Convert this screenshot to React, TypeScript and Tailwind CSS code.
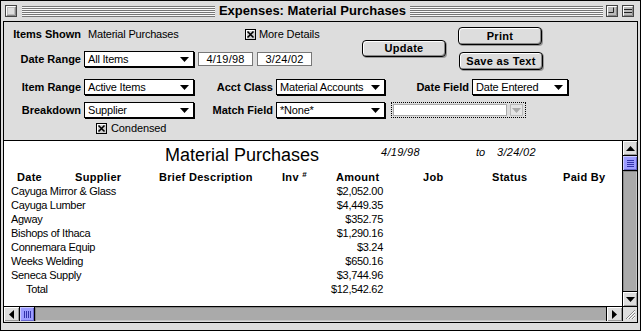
import React from "react"

const rows = [
  { supplier: "Cayuga Mirror & Glass", amount: "$2,052.00" },
  { supplier: "Cayuga Lumber", amount: "$4,449.35" },
  { supplier: "Agway", amount: "$352.75" },
  { supplier: "Bishops of Ithaca", amount: "$1,290.16" },
  { supplier: "Connemara Equip", amount: "$3.24" },
  { supplier: "Weeks Welding", amount: "$650.16" },
  { supplier: "Seneca Supply", amount: "$3,744.96" },
]

function DownArrow({ color = "#000" }: { color?: string }) {
  return (
    <svg width="9" height="5" viewBox="0 0 9 5">
      <polygon points="0,0 9,0 4.5,5" fill={color} />
    </svg>
  )
}

function Popup({ text, className }: { text: string; className: string }) {
  return (
    <div
      className={`h-[16px] border border-black bg-white shadow-[1px_1px_0_#000] flex items-center justify-between pl-[3px] pr-[4px] text-[11px] tracking-[-0.2px] ${className}`}
    >
      <span>{text}</span>
      <DownArrow />
    </div>
  )
}

function Check() {
  return (
    <svg width="11" height="11" viewBox="0 0 11 11">
      <rect x="0.5" y="0.5" width="10" height="10" fill="#cfcfcf" stroke="#000" />
      <path d="M1.5 9.5V1.5H9.5" stroke="#fff" fill="none" />
      <path d="M2.5 2.5L8.5 8.5M8.5 2.5L2.5 8.5" stroke="#000" strokeWidth="1.6" />
    </svg>
  )
}

function Label({ text, className }: { text: string; className: string }) {
  return <div className={`text-right font-bold text-[11px] ${className}`}>{text}</div>
}

function Btn({ text, className }: { text: string; className: string }) {
  return (
    <div
      className={`rounded-[4px] border border-black bg-[#dddddd] shadow-[inset_1px_1px_0_#fff,inset_-1px_-1px_0_#888,1px_1px_0_#999] flex items-center justify-center font-bold text-[11px] tracking-[0.3px] ${className}`}
    >
      {text}
    </div>
  )
}

function DateBox({ text }: { text: string }) {
  return (
    <div className="w-[55px] h-[14px] mt-[1px] border border-[#777] bg-white flex items-center justify-center text-[11px] tracking-[0.2px]">
      {text}
    </div>
  )
}

function TitleBox({ kind }: { kind: "close" | "zoom" | "shade" }) {
  return (
    <svg width="12" height="12" viewBox="0 0 12 12">
      <rect x="0.5" y="0.5" width="11" height="11" fill="#bbb" stroke="#444" />
      <path d="M1.5 10.5V1.5H10.5" stroke="#fff" fill="none" />
      <path d="M2 10.5H10.5V2" stroke="#888" fill="none" />
      {kind === "close" && <rect x="3" y="3" width="6" height="6" fill="#ddd" />}
      {kind === "zoom" && <path d="M2.5 7.5H7.5V2.5" stroke="#222" fill="none" />}
      {kind === "shade" && <path d="M2 4.5H10M2 7.5H10" stroke="#222" />}
    </svg>
  )
}

const stripes =
  "h-[11px] bg-[repeating-linear-gradient(to_bottom,#777_0px,#777_1px,#fafafa_1px,#fafafa_2px)]"

export default function App() {
  return (
    <div className="w-[641px] h-[331px] bg-[#dddddd] border border-black flex flex-col font-['Liberation_Sans',sans-serif] text-black overflow-hidden">
      {/* title bar */}
      <div className="h-[20px] flex items-center pl-[4px] pr-[6px]">
        <TitleBox kind="close" />
        <div className={`flex-1 ml-[5px] ${stripes}`} />
        <div className="px-[4px] font-bold text-[13px] leading-[20px]">Expenses: Material Purchases</div>
        <div className={`flex-1 ${stripes}`} />
        <div className="ml-[3px]">
          <TitleBox kind="zoom" />
        </div>
        <div className="ml-[4px]">
          <TitleBox kind="shade" />
        </div>
      </div>

      <div className="flex-1 px-[2px] pb-[7px] flex flex-col">
        <div className="flex-1 border border-black flex flex-col">
          {/* control panel */}
          <div className="h-[119px] border-b border-black bg-[#dddddd] flex flex-col">
            <div className="h-[57px] flex items-start">
              <div className="w-[358px] flex flex-col pt-[6px]">
                <div className="h-[13px] flex items-center">
                  <Label text="Items Shown" className="w-[77px]" />
                  <div className="ml-[7px] w-[157px] text-[11px] tracking-[-0.2px]">Material Purchases</div>
                  <Check />
                  <span className="ml-[3px] text-[11px] tracking-[-0.1px]">More Details</span>
                </div>
                <div className="h-[16px] mt-[10px] flex items-start">
                  <Label text="Date Range" className="w-[77px] leading-[16px]" />
                  <Popup text="All Items" className="ml-[3px] w-[110px]" />
                  <div className="ml-[4px]">
                    <DateBox text="4/19/98" />
                  </div>
                  <div className="ml-[4px]">
                    <DateBox text="3/24/02" />
                  </div>
                </div>
              </div>
              <Btn text="Update" className="mt-[18px] w-[84px] h-[17px]" />
              <div className="ml-[12px] mt-[5px] flex flex-col">
                <Btn text="Print" className="w-[84px] h-[18px]" />
                <Btn text="Save as Text" className="ml-[1px] mt-[7px] w-[84px] h-[18px]" />
              </div>
            </div>

            <div className="h-[16px] flex items-center">
              <Label text="Item Range" className="w-[77px]" />
              <Popup text="Active Items" className="ml-[3px] w-[110px]" />
              <Label text="Acct Class" className="w-[79px]" />
              <Popup text="Material Accounts" className="ml-[3px] w-[109px]" />
              <Label text="Date Field" className="w-[84px]" />
              <Popup text="Date Entered" className="ml-[3px] w-[96px]" />
            </div>

            <div className="h-[16px] mt-[7px] flex items-center">
              <Label text="Breakdown" className="w-[77px]" />
              <Popup text="Supplier" className="ml-[3px] w-[110px]" />
              <Label text="Match Field" className="w-[79px]" />
              <Popup text="*None*" className="ml-[3px] w-[109px]" />
              <div className="ml-[6px] w-[135px] h-[16px] border border-dotted border-black flex items-center pl-[1px]">
                <div className="w-[114px] h-[12px] border border-[#aaa] bg-white" />
                <div className="ml-[3px] w-[13px] h-[12px] border border-[#bbb] bg-[#e4e4e4] flex items-center justify-center">
                  <DownArrow color="#aaa" />
                </div>
              </div>
            </div>

            <div className="h-[11px] mt-[5px] flex items-center pl-[92px]">
              <Check />
              <span className="ml-[4px] text-[11px] tracking-[-0.1px]">Condensed</span>
            </div>
          </div>

          {/* list area */}
          <div className="h-[165px] flex">
            <div className="w-[618px] bg-white flex flex-col pt-[4px] overflow-hidden">
              <div className="h-[20px] flex items-start pl-[161px]">
                <div className="w-[216px] text-[18px] leading-[20px]">Material Purchases</div>
                <div className="w-[95px] mt-[1px] text-[11px] leading-[13px] italic tracking-[0.3px]">4/19/98</div>
                <div className="w-[21px] mt-[1px] text-[11px] leading-[13px] italic">to</div>
                <div className="mt-[1px] text-[11px] leading-[13px] italic tracking-[0.3px]">3/24/02</div>
              </div>
              <div className="mt-[6px] h-[13px] flex items-center pl-[13px] font-bold text-[11px] tracking-[0.3px]">
                <div className="w-[58px]">Date</div>
                <div className="w-[84px]">Supplier</div>
                <div className="w-[123px]">Brief Description</div>
                <div className="w-[54px]">
                  Inv <span className="text-[8px] align-top">#</span>
                </div>
                <div className="w-[87px]">Amount</div>
                <div className="w-[69px]">Job</div>
                <div className="w-[71px]">Status</div>
                <div>Paid By</div>
              </div>
              {rows.map((r) => (
                <div key={r.supplier} className="w-[379px] h-[14px] flex items-center justify-between pl-[7px] text-[11px] tracking-[-0.3px]">
                  <span>{r.supplier}</span>
                  <span>{r.amount}</span>
                </div>
              ))}
              <div className="w-[379px] h-[14px] flex items-center justify-between pl-[22px] text-[11px] tracking-[-0.3px]">
                <span>Total</span>
                <span>$12,542.62</span>
              </div>
            </div>

            {/* vertical scrollbar */}
            <div className="w-[15px] border-l border-black flex flex-col">
              <div className="h-[15px] border-b border-black bg-[#dddddd] shadow-[inset_1px_1px_0_#fff,inset_-1px_-1px_0_#999] flex items-center justify-center">
                <svg width="9" height="5" viewBox="0 0 9 5">
                  <polygon points="0,5 9,5 4.5,0" fill="#000" />
                </svg>
              </div>
              <div className="h-[15px] border-b border-black bg-[#9c9cff] shadow-[inset_1px_1px_0_#ccccff,inset_-1px_-1px_0_#6666cc] flex flex-col items-center justify-center gap-[1px]">
                <div className="w-[7px] h-[1px] bg-[#3333aa]" />
                <div className="w-[7px] h-[1px] bg-[#3333aa]" />
                <div className="w-[7px] h-[1px] bg-[#3333aa]" />
                <div className="w-[7px] h-[1px] bg-[#3333aa]" />
              </div>
              <div className="flex-1 bg-[#aaaaaa] shadow-[inset_1px_1px_0_#888,inset_-1px_0_0_#c4c4c4]" />
              <div className="h-[15px] border-t border-black bg-[#dddddd] shadow-[inset_1px_1px_0_#fff,inset_-1px_-1px_0_#999] flex items-center justify-center">
                <DownArrow />
              </div>
            </div>
          </div>

          {/* horizontal scrollbar */}
          <div className="h-[15px] border-t border-black flex">
            <div className="w-[16px] border-r border-black bg-[#dddddd] shadow-[inset_1px_1px_0_#fff,inset_-1px_-1px_0_#999] flex items-center justify-center">
              <svg width="5" height="9" viewBox="0 0 5 9">
                <polygon points="5,0 5,9 0,4.5" fill="#000" />
              </svg>
            </div>
            <div className="w-[15px] border-r border-black bg-[#9c9cff] shadow-[inset_1px_1px_0_#ccccff,inset_-1px_-1px_0_#6666cc] flex items-center justify-center gap-[1px]">
              <div className="w-[1px] h-[7px] bg-[#3333aa]" />
              <div className="w-[1px] h-[7px] bg-[#3333aa]" />
              <div className="w-[1px] h-[7px] bg-[#3333aa]" />
              <div className="w-[1px] h-[7px] bg-[#3333aa]" />
            </div>
            <div className="flex-1 bg-[#aaaaaa] shadow-[inset_1px_1px_0_#888,inset_0_-1px_0_#c4c4c4]" />
            <div className="w-[16px] border-l border-black bg-[#dddddd] shadow-[inset_1px_1px_0_#fff,inset_-1px_-1px_0_#999] flex items-center justify-center">
              <svg width="5" height="9" viewBox="0 0 5 9">
                <polygon points="0,0 0,9 5,4.5" fill="#000" />
              </svg>
            </div>
            <div className="w-[15px] border-l border-black bg-[#dddddd] flex items-center justify-center">
              <svg width="11" height="11" viewBox="0 0 11 11">
                <path d="M1 10L10 1M4 10L10 4M7 10L10 7" stroke="#888" strokeWidth="1" />
                <path d="M2 10L10 2M5 10L10 5M8 10L10 8" stroke="#fff" strokeWidth="1" />
              </svg>
            </div>
          </div>
        </div>
      </div>
    </div>
  )
}
